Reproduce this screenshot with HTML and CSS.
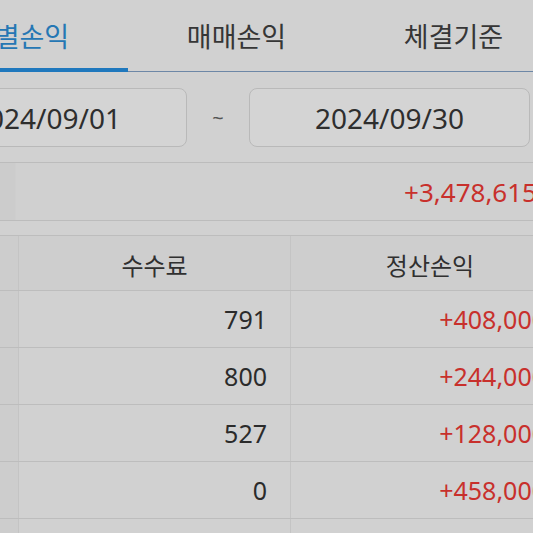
FILE: index.html
```html
<!DOCTYPE html>
<html lang="ko">
<head>
  <meta charset="UTF-8">
  <meta name="viewport" content="width=device-width, initial-scale=1.0">
  <title>일별손익</title>
  <link rel="stylesheet" href="styles.css">
</head>
<body>
  <div class="screen">
    <div class="tabs">
      <div class="tab active">일별손익</div>
      <div class="tab">매매손익</div>
      <div class="tab">체결기준</div>
    </div>

    <div class="period">
      <div class="date-box">2024/09/01</div>
      <div class="tilde">~</div>
      <div class="date-box">2024/09/30</div>
    </div>

    <div class="summary">
      <span class="plus">+3,478,615</span>
    </div>

    <div class="grid">
      <div class="row head">
        <div class="cell"></div>
        <div class="cell">수수료</div>
        <div class="cell">정산손익</div>
      </div>
      <div class="row">
        <div class="cell"></div>
        <div class="cell num">791</div>
        <div class="cell num plus">+408,000</div>
      </div>
      <div class="row">
        <div class="cell"></div>
        <div class="cell num">800</div>
        <div class="cell num plus">+244,000</div>
      </div>
      <div class="row">
        <div class="cell"></div>
        <div class="cell num">527</div>
        <div class="cell num plus">+128,000</div>
      </div>
      <div class="row">
        <div class="cell"></div>
        <div class="cell num">0</div>
        <div class="cell num plus">+458,000</div>
      </div>
      <div class="row">
        <div class="cell"></div>
        <div class="cell num"></div>
        <div class="cell num plus"></div>
      </div>
    </div>
  </div>
</body>
</html>
```

FILE: styles.css
```css
html,
body {
  margin: 0;
  padding: 0;
  background: #d1d1d1;
  overflow: hidden;
  font-family: "Noto Sans", "Noto Sans CJK KR", sans-serif;
  color: #2b2b2b;
}
.screen {
  width: 663px;
  margin-left: -94px;
}

/* tabs */
.tabs {
  display: flex;
  height: 71px;
  padding-left: 5px;
  border-bottom: 1px solid #6d87a6;
}
.tab {
  flex: 0 0 217px;
  display: flex;
  justify-content: center;
  align-items: center;
  padding-top: 2px;
  margin-bottom: -1px;
  border-bottom: 4px solid transparent;
  font-family: "Noto Sans CJK KR", sans-serif;
  font-size: 27px;
  color: #363636;
}
.tab.active {
  color: #2577b4;
  border-bottom-color: #1f78bd;
}

/* period */
.period {
  display: grid;
  grid-template-columns: 281px 62px 281px;
  margin-top: 16px;
}
.date-box {
  height: 57px;
  display: flex;
  justify-content: center;
  align-items: center;
  border: 1px solid #b9b9b9;
  border-radius: 8px;
  background: #d4d4d4;
  font-size: 28px;
  color: #2e2e2e;
}
.tilde {
  display: flex;
  justify-content: center;
  align-items: center;
  font-size: 20px;
  color: #555;
}

/* summary */
.summary {
  margin-top: 15px;
  height: 57px;
  display: flex;
  justify-content: flex-end;
  align-items: center;
  padding-right: 32px;
  border-top: 1px solid #bcbcbc;
  border-bottom: 1px solid #bcbcbc;
  background: linear-gradient(90deg, #cccccc 0, #cccccc 109px, #d0d0d0 110px);
  font-size: 26px;
}
.plus {
  color: #c8302c;
}

/* table */
.grid {
  margin-top: 14px;
  border-top: 1px solid #bdbdbd;
}
.row {
  display: grid;
  grid-template-columns: 112px 272px 279px;
  height: 56px;
  border-bottom: 1px solid #bdbdbd;
}
.row.head {
  height: 54px;
  background: #cecece;
}
.cell {
  display: flex;
  align-items: center;
  justify-content: center;
  border-left: 1px solid #c4c4c4;
  font-size: 25px;
}
.cell:first-child {
  border-left: none;
  background: #cdcdcd;
}
.head .cell {
  font-family: "Noto Sans CJK KR", sans-serif;
  font-size: 24px;
  color: #303030;
  padding-top: 2px;
}
.cell.num {
  justify-content: flex-end;
  padding-right: 23px;
}
```
